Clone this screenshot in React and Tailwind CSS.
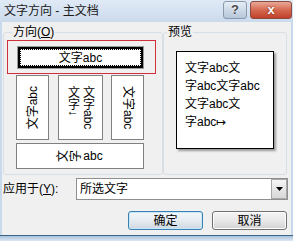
export default function App() {
  return (
    <div className="w-[293px] h-[241px] overflow-hidden flex flex-col bg-[#c9d9ec] [font-family:'Liberation_Sans','Noto_Sans_CJK_SC',sans-serif] text-[12px] text-black leading-[12px]">
      {/* title bar */}
      <div className="h-[22px] flex items-start bg-gradient-to-b from-[#e0eaf6] to-[#cbdaec]">
        <div className="pl-[4px] pt-[5px] text-[12px] text-[#1b1b1b]">文字方向 - 主文档</div>
        <div className="ml-auto flex gap-[3px] pt-[1px] pr-[1px]">
          <div className="w-[24px] h-[18px] rounded-[3px] border border-[#8a99ab] bg-gradient-to-b from-[#e6eef7] via-[#cdd9e7] to-[#b7c7da] flex items-center justify-center text-[13px] font-bold text-[#4a4a4a] [text-shadow:0_0_2px_#fff]">?</div>
          <div className="w-[42px] h-[18px] rounded-[3px] border border-[#8a4a3e] bg-gradient-to-b from-[#e9a898] via-[#d4684f] to-[#c0402a] flex items-center justify-center text-[13px] font-bold text-white [text-shadow:0_0_2px_#6b1a0e]">x</div>
        </div>
      </div>

      {/* body */}
      <div className="h-[213px] mx-[2px] bg-[#f0f0f0] flex flex-col">
        <div className="flex mt-[4px] ml-[1px]">
          {/* direction group */}
          <fieldset className="w-[160px] h-[149px] border border-[#d5dfe5] rounded-[3px] px-[3px] flex flex-col">
            <legend className="ml-[5px] px-[1px] leading-[12px]">方向(<span className="underline">O</span>)</legend>
            <div className="mt-[2px] w-[149px] h-[34px] border border-[#d0303a] pl-[9px] pt-[5px]">
              <div className="w-[127px] h-[23px] border border-[#9a9a9a] bg-white">
                <div className="w-full h-full border-2 border-black">
                  <div className="w-full h-full border border-dotted border-black flex items-center justify-center">文字abc</div>
                </div>
              </div>
            </div>
            <div className="mt-[1px] ml-[9px] w-[128px] h-[65px] flex justify-between">
              <div className="w-[33px] h-full border border-[#808080] bg-white flex items-center justify-center">
                <span className="[writing-mode:vertical-rl] [text-orientation:sideways] rotate-180">文字abc</span>
              </div>
              <div className="w-[45px] h-full border border-[#808080] bg-white flex justify-center gap-[3px] pt-[10px]">
                <span className="[writing-mode:vertical-rl]">文字↓</span>
                <span className="[writing-mode:vertical-rl]">文字abc</span>
              </div>
              <div className="w-[33px] h-full border border-[#808080] bg-white flex items-center justify-center">
                <span className="[writing-mode:vertical-rl] [text-orientation:sideways]">文字abc</span>
              </div>
            </div>
            <div className="mt-[3px] ml-[9px] w-[128px] h-[26px] border border-[#808080] bg-white flex items-center justify-center gap-[1px]">
              <span className="inline-block w-[12px] h-[12px] -rotate-90">文</span>
              <span className="inline-block w-[12px] h-[12px] -rotate-90">字</span>
              <span>abc</span>
            </div>
          </fieldset>

          {/* preview group */}
          <fieldset className="w-[124px] h-[149px] border border-[#d5dfe5] rounded-[3px] px-[3px]">
            <legend className="px-[1px] leading-[12px]">预览</legend>
            <div className="mt-[13px] ml-[9px] w-[98px] h-[98px] border border-black bg-white shadow-[2px_2px_2px_#9a9a9a] pl-[8px] pt-[7px] flex flex-col">
              <div className="h-[18px] flex items-center">文字abc文</div>
              <div className="h-[18px] flex items-center">字abc文字abc</div>
              <div className="h-[18px] flex items-center">文字abc文</div>
              <div className="h-[18px] flex items-center">字abc↦</div>
            </div>
          </fieldset>
        </div>

        {/* apply to */}
        <div className="mt-[3px] h-[22px] flex items-center">
          <div className="pl-[1px] w-[74px]">应用于(<span className="underline">Y</span>):</div>
          <div className="w-[212px] h-[22px] border border-[#8e8f8f] bg-white flex items-center">
            <div className="flex-1 pl-[3px]">所选文字</div>
            <div className="w-[16px] h-[20px] border border-[#a8a8a8] bg-gradient-to-b from-[#f5f5f5] to-[#d8d8d8] flex items-center justify-center">
              <svg width="7" height="4" viewBox="0 0 7 4"><path d="M0 0h7L3.5 4z" fill="#000" /></svg>
            </div>
          </div>
        </div>

        {/* buttons */}
        <div className="mt-[11px] flex justify-end gap-[9px] pr-[4px]">
          <div className="w-[75px] h-[19px] rounded-[3px] border border-[#3c7fb1] bg-gradient-to-b from-[#f3f7fa] via-[#e6ecf1] to-[#cfd8e0] shadow-[inset_0_0_0_1px_#c6e8fb] flex items-center justify-center">确定</div>
          <div className="w-[75px] h-[19px] rounded-[3px] border border-[#707070] bg-gradient-to-b from-[#f4f4f4] via-[#e9e9e9] to-[#d2d2d2] shadow-[inset_0_0_0_1px_#fcfcfc] flex items-center justify-center">取消</div>
        </div>
      </div>

      {/* bottom frame */}
      <div className="h-[6px] border-t border-[#3b6688] bg-gradient-to-b from-[#a9c2dd] to-[#dce8f4]" />
    </div>
  );
}
